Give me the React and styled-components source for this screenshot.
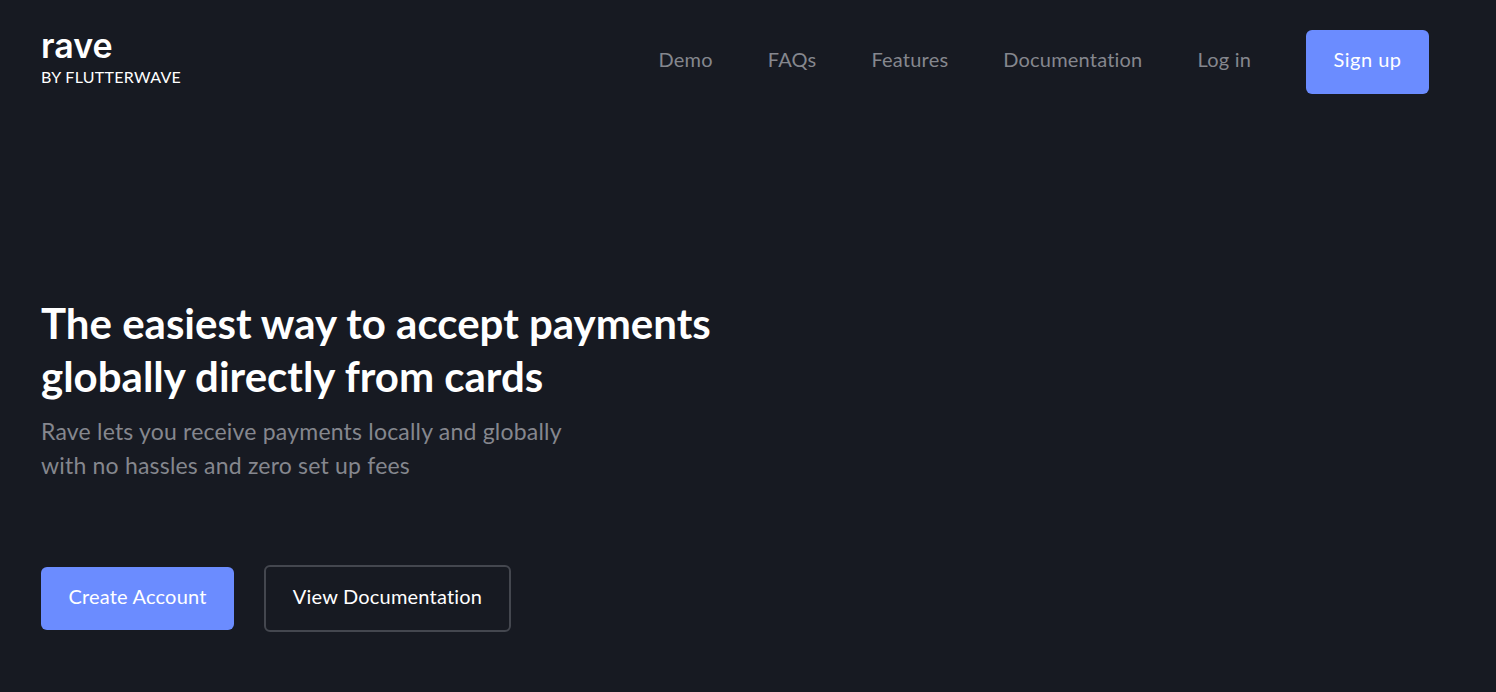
import React from "react";
import styled, { createGlobalStyle } from "styled-components";

const GlobalStyle = createGlobalStyle`
  html, body {
    margin: 0;
    padding: 0;
    background: #171a22;
  }
  * {
    box-sizing: border-box;
  }
`;

const Page = styled.div`
  height: 692px;
  overflow: hidden;
  background: #171a22;
  font-family: Lato, "Noto Sans", sans-serif;
  font-variant-ligatures: none;
  color: white;
`;

const Header = styled.header`
  display: flex;
  align-items: flex-start;
  justify-content: space-between;
  padding: 30px 67px 0 41px;
`;

const Brand = styled.a`
  display: flex;
  flex-direction: column;
  color: white;
  text-decoration: none;
`;

const BrandName = styled.span`
  font-family: Inter, sans-serif;
  font-size: 34px;
  font-weight: 600;
  line-height: 32px;
`;

const BrandSub = styled.span`
  font-size: 16px;
  line-height: 22px;
  margin-top: 4px;
  letter-spacing: 0.3px;
`;

const Nav = styled.nav`
  display: flex;
  align-items: center;
  gap: 55px;
`;

const NavLink = styled.a`
  font-size: 20px;
  letter-spacing: 0.2px;
  color: #85878e;
  margin-bottom: 6px;
`;

const Button = styled.a`
  display: flex;
  align-items: center;
  justify-content: center;
  width: ${(props) => props.$width}px;
  height: ${(props) => props.$height}px;
  padding-bottom: 6px;
  font-size: 20px;
  letter-spacing: ${(props) => props.$spacing || 0.2}px;
  color: white;
  border-radius: 6px;
  background: ${(props) => (props.$outline ? "transparent" : "#6b8cff")};
  border: ${(props) => (props.$outline ? "2px solid #44474f" : "none")};
`;

const Hero = styled.section`
  display: flex;
  flex-direction: column;
  padding: 203px 0 0 41px;
`;

const Title = styled.h1`
  margin: 0;
  font-size: 42px;
  font-weight: 700;
  line-height: 53px;
`;

const Lead = styled.p`
  margin: 11px 0 0;
  font-size: 23px;
  letter-spacing: 0.2px;
  line-height: 34px;
  color: #85878e;
`;

const Actions = styled.div`
  display: flex;
  align-items: center;
  gap: 30px;
  margin-top: 83px;
`;

export default function App() {
  return (
    <Page>
      <GlobalStyle />
      <Header>
        <Brand>
          <BrandName>rave</BrandName>
          <BrandSub>BY FLUTTERWAVE</BrandSub>
        </Brand>
        <Nav>
          <NavLink>Demo</NavLink>
          <NavLink>FAQs</NavLink>
          <NavLink>Features</NavLink>
          <NavLink>Documentation</NavLink>
          <NavLink>Log in</NavLink>
          <Button $width={123} $height={64} $spacing={0.5}>Sign up</Button>
        </Nav>
      </Header>
      <Hero>
        <Title>
          The easiest way to accept payments
          <br />
          globally directly from cards
        </Title>
        <Lead>
          Rave lets you receive payments locally and globally
          <br />
          with no hassles and zero set up fees
        </Lead>
        <Actions>
          <Button $width={193} $height={63}>Create Account</Button>
          <Button $width={247} $height={67} $outline>View Documentation</Button>
        </Actions>
      </Hero>
    </Page>
  );
}
